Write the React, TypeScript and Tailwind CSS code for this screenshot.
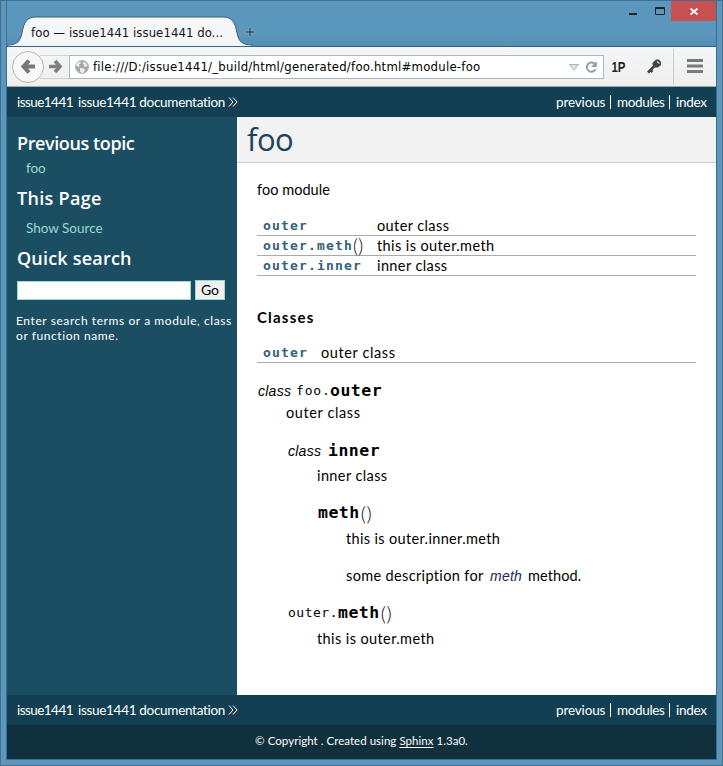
import type { ReactNode } from "react";

const body = "font-['Lato','Liberation_Sans',sans-serif] [font-variant-ligatures:none]";
const mono = "font-['DejaVu_Sans_Mono',monospace]";
const ui = "font-['DejaVu_Sans_Condensed','DejaVu_Sans',sans-serif]";
const heading = "font-['Open_Sans','Noto_Sans',sans-serif]";

function Line({ className = "", children }: { className?: string; children: ReactNode }) {
  return (
    <div className={`flex h-5 shrink-0 items-center whitespace-pre leading-5 ${className}`}>{children}</div>
  );
}

function RelBar() {
  return (
    <nav className="flex h-[30px] shrink-0 items-center justify-between bg-[#133f52] pt-px pl-[10px] pr-[9px] text-[13.5px] text-white">
      <div className="flex whitespace-pre">
        <a className="w-[61px] tracking-[-0.55px]">issue1441</a>
        <a className="w-[150px] tracking-[-0.3px]">issue1441 documentation</a>
        <svg className="mt-[5px]" width="10" height="10" viewBox="0 0 10 10">
          <path d="M1 .5l4 4.500-4 4.500M5 .5l4 4.500-4 4.500" fill="none" stroke="#fff" />
        </svg>
      </div>
      <div className="flex items-center">
        <a className="w-[54px] tracking-[-0.15px]">previous</a>
        <span className="mr-[6px] mb-[2px] h-[14px] w-px bg-white" />
        <a className="w-[52px] tracking-[-0.35px]">modules</a>
        <span className="mr-[6px] mb-[2px] h-[14px] w-px bg-white" />
        <a className="w-[31px] tracking-[-0.25px]">index</a>
      </div>
    </nav>
  );
}

function TitleBar() {
  return (
    <header className="flex h-[45px] shrink-0 justify-between bg-gradient-to-b from-[#5b97bd] from-70% to-[#558eb4]">
      <div className="relative flex w-[270px] items-end">
        <svg className="absolute bottom-0 left-0" width="246" height="30" viewBox="0 0 246 30">
          <path d="M0 29 C10 29 13 26 15 17 C17 6 20 1 29 1 H216 C225 1 228 6 230 17 C232 26 235 29 246 29 V30 H0Z" fill="#f5f6f7" stroke="#34617f" />
          <path d="M0 30 C10 29 14 27 16 18 H229 C231 27 235 29 246 30Z" fill="#f5f6f7" />
        </svg>
        <span className={`relative ml-[24px] mb-[4px] whitespace-nowrap text-[13px] leading-[18px] tracking-[0.06px] text-[#151515] ${ui}`}>
          foo — issue1441 issue1441 do...
        </span>
        <svg className="absolute bottom-[8px] left-[237px]" width="12" height="12" viewBox="0 0 12 12">
          <path d="M5 1h2v4h4v2H7v4H5V7H1V5h4z" fill="#33495a" stroke="#9abed4" strokeWidth=".6" />
        </svg>
      </div>
      <div className="flex h-5">
        <svg width="43" height="20" viewBox="0 0 43 20">
          <path d="M1 12h8v2H1z" fill="#222" />
          <path d="M27.5 6.500h9v7h-9z M27 7.500h10" fill="none" stroke="#222" />
        </svg>
        <svg className="bg-[#c75050]" width="45" height="20" viewBox="0 0 45 20">
          <path d="M19.5 7.5l7 6m0-6l-7 6" stroke="#fff" strokeWidth="1.7" />
        </svg>
      </div>
    </header>
  );
}

function Toolbar() {
  return (
    <div className="flex h-[41px] shrink-0 items-center border-b border-[#a4a4a4] border-t border-t-[#34617f] bg-gradient-to-b from-[#f5f6f7] to-[#eeeeee]">
      <svg className="ml-[4px]" width="58" height="34" viewBox="0 0 58 34">
        <path d="M29 5.5h29M29 28.5h29" stroke="#d0d2d4" />
        <circle cx="17" cy="17" r="15.5" fill="#f7f7f7" stroke="#b3b5b7" />
        <path d="M24 16.500H13M18 10.500l-5.500 6 5.500 6" fill="none" stroke="#75787b" strokeWidth="4" />
        <path d="M38 16.500h9M44 11l5 5.500-5 5.500" fill="none" stroke="#7d8083" strokeWidth="3.600" />
      </svg>
      <div className="flex h-[24px] w-[535px] items-center border border-[#abb7bf] bg-white pl-[5px]">
        <svg width="14" height="14" viewBox="0 0 14 14">
          <circle cx="7" cy="7" r="6.500" fill="#a5a5a5" stroke="#b5b5b5" />
          <path d="M2 3l3-1.500 1 1.500-2 1.500.5 2L3 7 1 5zM8 2l3 1 1.500 3-2 1L8.500 6 9 4.500 7.500 3.500zM5 8l4 .5 1 2L8 13H6.500L5 11z" fill="#ededed" />
        </svg>
        <span className={`ml-[4px] w-[480px] whitespace-nowrap text-[13px] tracking-[0.24px] text-black ${ui}`}>
          file:///D:/issue1441/_build/html/generated/foo.html#module-foo
        </span>
        <svg width="34" height="14" viewBox="0 0 34 14" className="-ml-[4px]">
          <path d="M.5 4.500h9L5 10z" fill="#dfe5e9" stroke="#a9b3ba" />
          <path d="M26.500 9.200a4.600 4.600 0 1 1-1-5.500" fill="none" stroke="#8fa0ac" strokeWidth="2" />
          <path d="M27.800 1v6h-6z" fill="#8fa0ac" />
        </svg>
      </div>
      <svg className="ml-[8px]" width="16" height="16" viewBox="0 0 16 16">
        <text x="-.5" y="13" fontSize="14" fontWeight="bold" textLength="14" lengthAdjust="spacingAndGlyphs" fill="#252525" className="font-['Liberation_Sans',sans-serif]">1P</text>
      </svg>
      <svg className="ml-[18px]" width="17" height="17" viewBox="0 0 17 17">
        <path d="M6.500 5L10 1.500h3L15 4v3l-3 2.500H9L6.500 7z" fill="#444" />
        <path d="M8.500 8L2 14.500M4 11.500l2.500 2.500" stroke="#444" strokeWidth="2.600" />
        <path d="M11 3.500l2.500 2" stroke="#ddd" strokeWidth="1.200" />
      </svg>
      <span className="ml-[10px] h-[36px] w-px bg-[#c9cccf]" />
      <svg className="-mt-[2px] ml-[13px]" width="16" height="14" viewBox="0 0 16 14">
        <path d="M0 1.500h16M0 7h16M0 12.500h16" stroke="#777a7e" strokeWidth="3" />
      </svg>
    </div>
  );
}

function Sidebar() {
  const title = `h-6 whitespace-nowrap text-[18px] font-semibold leading-6 ${heading}`;
  return (
    <aside className="flex w-[230px] shrink-0 flex-col bg-[#1c4e63] pl-[10px] text-white">
      <h3 className={`mt-[14px] tracking-[-0.4px] ${title}`}>Previous topic</h3>
      <Line className="mt-[3px] pl-[9px] text-[13.500px] tracking-[-0.05px] text-[#98dbcc]">foo</Line>
      <h3 className={`mt-[8px] tracking-[0.3px] ${title}`}>This Page</h3>
      <Line className="mt-[8px] pl-[9px] text-[13.500px] text-[#98dbcc]">Show Source</Line>
      <h3 className={`mt-[8px] tracking-[0.2px] ${title}`}>Quick search</h3>
      <div className="mt-[10px] flex h-[20px] items-end gap-[4px]">
        <input className="h-[19px] w-[174px] border border-[#98dbcc] bg-white" />
        <button className="h-[20px] w-[30px] border border-[#98dbcc] bg-[#f0f0f0] text-[14px] leading-[18px] text-black">Go</button>
      </div>
      <p className="mt-[13px] -ml-px whitespace-pre text-[12px] leading-[15px] tracking-[0.58px]">
        {"Enter search terms or a module, class\nor function name."}
      </p>
    </aside>
  );
}

const summary = [
  { name: "outer", call: false, text: "outer class" },
  { name: "outer.meth", call: true, text: "this is outer.meth" },
  { name: "outer.inner", call: false, text: "inner class" },
];

const code = `${mono} text-[13px] tracking-[1.17px] font-bold text-[#355f7c]`;
const desc = `${mono} text-[16.500px] tracking-[0.5px] font-bold`;
const paren = "text-[19px] font-light tracking-[0.4px]";
const descParen = "ml-px text-[20px] font-light tracking-[0.6px]";
const cls = "font-['Liberation_Sans',sans-serif] italic text-[14px] tracking-[0.25px] pl-px";

function Content() {
  return (
    <main className="flex flex-1 flex-col bg-white text-[14.500px] tracking-[0.4px] text-black">
      <h1 className={`h-[46px] border-b border-[#cccccc] bg-[#f2f2f2] pl-[10px] text-[31px] font-normal leading-[45px] tracking-[-0.5px] text-[#20435c] ${heading}`}>foo</h1>
      <div className="flex flex-col pl-[20px] pr-[20px]">
        <Line className="mt-[17px] tracking-[0.05px]">foo module</Line>
        <div className="mt-[16px]">
          {summary.map((row) => (
            <Line key={row.name} className="border-b border-[#aaaaaa] pl-[6px]">
              <span className="flex w-[114px] items-center">
                <span className={code}>{row.name}</span>
                {row.call && <span className={paren}>()</span>}
              </span>
              {row.text}
            </Line>
          ))}
        </div>
        <Line className="mt-[31px] text-[15px] font-bold tracking-[1.2px]">Classes</Line>
        <Line className="mt-[16px] border-b border-[#aaaaaa] pl-[6px]">
          <span className={`w-[58px] ${code}`}>outer</span>
          <span className="tracking-[0.6px]">outer class</span>
        </Line>
        <Line className="mt-[18px]">
          <span className={`w-[39px] ${cls}`}>class</span>
          <span className={`w-[34px] text-[13px] tracking-[0.8px] ${mono}`}>foo.</span>
          <span className={desc}>outer</span>
        </Line>
        <Line className="mt-[2px] pl-[29px] tracking-[0.6px]">outer class</Line>
        <Line className="mt-[18px] pl-[30px]">
          <span className={`w-[41px] ${cls}`}>class</span>
          <span className={desc}>inner</span>
        </Line>
        <Line className="mt-[5px] pl-[60px]">inner class</Line>
        <Line className="mt-[17px] pl-[61px]">
          <span className={desc}>meth</span><span className={descParen}>()</span>
        </Line>
        <Line className="mt-[6px] pl-[89px] tracking-[0.35px]">this is outer.inner.meth</Line>
        <Line className="mt-[17px] pl-[89px]">
          <span className="w-[143px] tracking-[0.35px]">some description for</span>
          <span className={`w-[39px] ${cls} text-[#202a55]`}>meth</span>
          <span className="tracking-[0.1px]">method.</span>
        </Line>
        <Line className="mt-[17px] pl-[31px]">
          <span className={`w-[50px] text-[13px] tracking-[0.5px] ${mono}`}>outer.</span>
          <span className={desc}>meth</span><span className={descParen}>()</span>
        </Line>
        <Line className="mt-[6px] pl-[60px]">this is outer.meth</Line>
      </div>
    </main>
  );
}

export default function App() {
  return (
    <div className={`flex h-[766px] w-[723px] flex-col border border-[#436f8d] bg-[#5b97bd] px-[5px] pb-[5px] ${body}`}>
      <div className="flex flex-1 flex-col border-x border-b border-[#3b6e90]">
        <TitleBar />
        <Toolbar />
        <RelBar />
        <div className="flex h-[578px] shrink-0">
          <Sidebar />
          <Content />
        </div>
        <RelBar />
        <footer className="flex h-[34px] items-center justify-center bg-[#11303d] pb-[2px] text-[11.500px] tracking-[0.04px] text-white">
          <p>© Copyright . Created using <a className="underline underline-offset-2">Sphinx</a> 1.3a0.</p>
        </footer>
      </div>
    </div>
  );
}
